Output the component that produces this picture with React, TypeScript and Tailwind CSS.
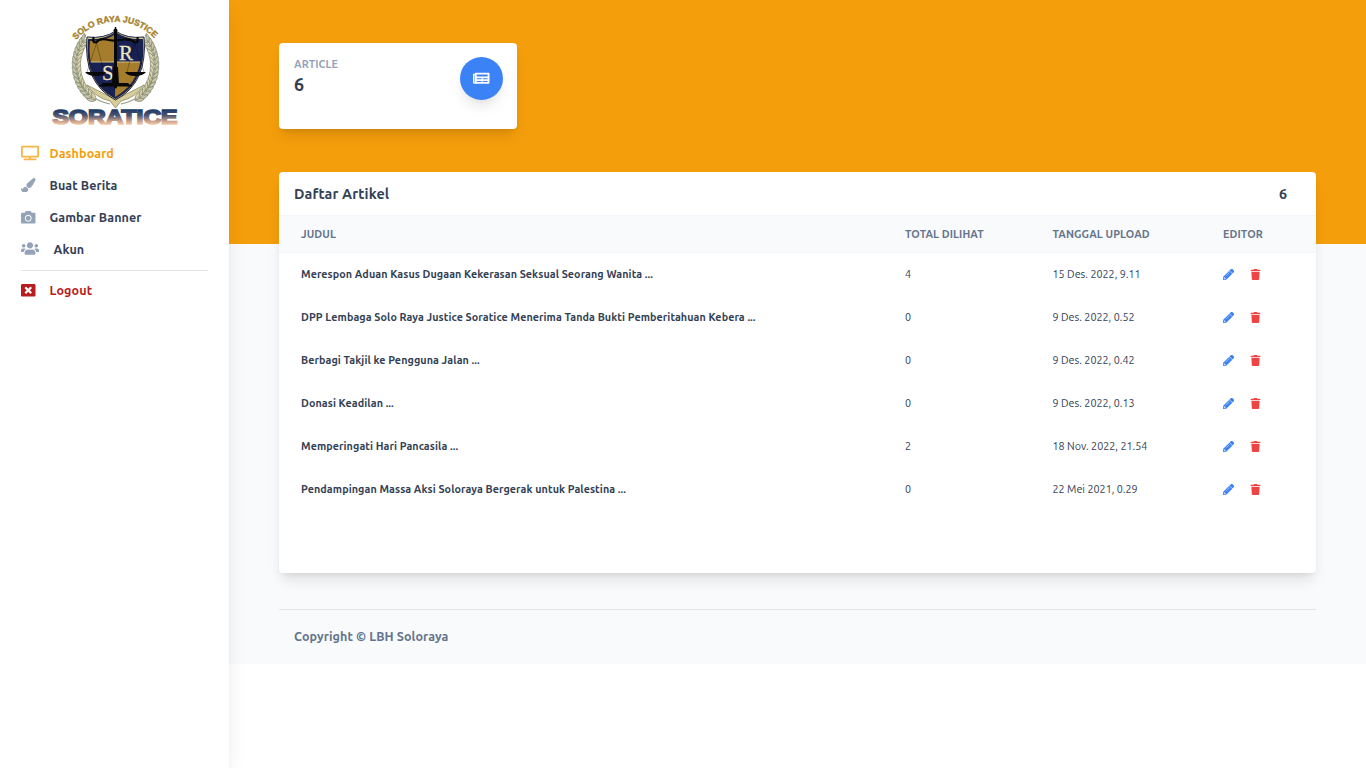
import {
  FaTv,
  FaPaintBrush,
  FaCamera,
  FaUsers,
  FaWindowClose,
  FaNewspaper,
  FaPencilAlt,
  FaTrash,
} from "react-icons/fa";

type Article = { title: string; views: number; date: string };

const articles: Article[] = [
  { title: "Merespon Aduan Kasus Dugaan Kekerasan Seksual Seorang Wanita ...", views: 4, date: "15 Des. 2022, 9.11" },
  { title: "DPP Lembaga Solo Raya Justice Soratice Menerima Tanda Bukti Pemberitahuan Kebera ...", views: 0, date: "9 Des. 2022, 0.52" },
  { title: "Berbagi Takjil ke Pengguna Jalan ...", views: 0, date: "9 Des. 2022, 0.42" },
  { title: "Donasi Keadilan ...", views: 0, date: "9 Des. 2022, 0.13" },
  { title: "Memperingati Hari Pancasila ...", views: 2, date: "18 Nov. 2022, 21.54" },
  { title: "Pendampingan Massa Aksi Soloraya Bergerak untuk Palestina ...", views: 0, date: "22 Mei 2021, 0.29" },
];

const leaves = Array.from({ length: 15 }, (_, i) => {
  const deg = 142 + i * 6.6;
  const a = (deg * Math.PI) / 180;
  return { x: 75.5 + Math.cos(a) * 39, y: 60 - Math.sin(a) * 41, deg };
});

function Laurel() {
  return (
    <g>
      <path d="M46 30C33 44 32 64 40 78C46 88 56 96 70 99" fill="none" stroke="#9a9d84" strokeWidth="1.2" />
      {leaves.map((l, i) => (
        <g key={i} transform={`translate(${l.x} ${l.y}) rotate(${180 - l.deg})`}>
          <path d="M0 3.5Q-5.5 1-4-5Q0-2.5 0 3.5Z" fill="#c9c6a6" stroke="#747d6b" strokeWidth=".6" />
          <path d="M0 3.5Q5.5 1 4-5Q0-2.5 0 3.5Z" fill="#ded5a9" stroke="#747d6b" strokeWidth=".6" />
        </g>
      ))}
    </g>
  );
}

function Logo() {
  return (
    <svg width="150" height="130" viewBox="0 0 150 130" className="block">
      <defs>
        <path id="arc" d="M36 35A53 53 0 0 1 116 35" />
        <linearGradient id="word" x1="0" y1="104" x2="0" y2="120" gradientUnits="userSpaceOnUse">
          <stop offset="0" stopColor="#173663" />
          <stop offset=".4" stopColor="#4d5471" />
          <stop offset=".75" stopColor="#c8a08c" />
          <stop offset="1" stopColor="#f9cfab" />
        </linearGradient>
        <clipPath id="shield">
          <path d="M49 35Q64 36 75.5 28Q87 36 102 35Q106 76 75.5 93Q45 76 49 35Z" />
        </clipPath>
      </defs>
      <text fontFamily="Liberation Sans, Arial, sans-serif" fontWeight="700" fontSize="8.6" fill="#a8842f" stroke="#a8842f" strokeWidth=".4">
        <textPath href="#arc" textLength="88" lengthAdjust="spacing">SOLO RAYA JUSTICE</textPath>
      </text>
      <Laurel />
      <g transform="translate(151 0) scale(-1 1)">
        <Laurel />
      </g>
      <path d="M47 80Q62 88 75.5 94Q89 88 104 80Q95 93 81 96L75.5 103L70 96Q56 93 47 80Z" fill="#d8cc97" stroke="#7b8060" strokeWidth=".7" />
      <path d="M47 32Q64 34 75.5 26Q87 34 104 32Q108 78 75.5 95Q43 78 47 32Z" fill="#d8cb92" stroke="#1b2140" strokeWidth="1" />
      <g clipPath="url(#shield)">
        <rect x="44" y="24" width="31.5" height="33" fill="#a67d2d" />
        <rect x="75.5" y="24" width="32" height="33" fill="#172154" />
        <rect x="44" y="57" width="31.5" height="41" fill="#172154" />
        <rect x="75.5" y="57" width="32" height="41" fill="#a67d2d" />
        <path d="M44 57H107" stroke="#d2c080" strokeWidth="1" />
      </g>
      <path d="M49 35Q64 36 75.5 28Q87 36 102 35Q106 76 75.5 93Q45 76 49 35Z" fill="none" stroke="#1b2348" strokeWidth="2" />
      <text x="79" y="54.5" fontFamily="Liberation Serif, serif" fontSize="21" fill="#eee4bd" stroke="#eee4bd" strokeWidth=".3">R</text>
      <text x="62" y="75" fontFamily="Liberation Serif, serif" fontSize="21" fill="#eee4bd" stroke="#eee4bd" strokeWidth=".3">S</text>
      <g fill="none" stroke="#080808" strokeLinecap="round">
        <path d="M53.5 33Q52 37.5 56 37.5Q60 33 66 34.5T75.5 35.5T85 34.5T95 37.5Q99 37.5 97.5 33" strokeWidth="2.2" />
        <path d="M56.5 38L47 67M56.5 38L64 67M94.5 38L87 67M94.5 38L104 67" strokeWidth=".3" />
        <path d="M75.5 27V82" strokeWidth="3" />
      </g>
      <g fill="#080808">
        <circle cx="75.5" cy="25.5" r="2" />
        <path d="M74.8 22h1.4v4.500h-1.4zM45 67H66Q64 71 56 71T45 67ZM85 67H106Q103 71 95 71T85 67ZM73 62h5l1 17 3 2H69l3-2zM63 78H88L90 80H92V81.5H59V80H61Z" />
      </g>
      <text x="12.500" y="119.300" textLength="125" lengthAdjust="spacingAndGlyphs" fontFamily="Liberation Sans, Arial, sans-serif" fontWeight="700" fontSize="21" fill="url(#word)" stroke="url(#word)" strokeWidth="1.700">SORATICE</text>
    </svg>
  );
}

export default function App() {
  return (
    <div className="flex h-[768px] w-[1366px] overflow-hidden bg-white font-['Ubuntu','Noto_Sans',sans-serif] text-[#334155]">
      <aside className="z-10 flex w-[229px] shrink-0 flex-col bg-white px-[21px] shadow-[0_9px_22px_-4px_rgba(0,0,0,0.1),0_3px_5px_-2px_rgba(0,0,0,0.05)]">
        <div className="-mx-[2px] mt-[5px] h-[132px] pl-[21px]">
          <Logo />
        </div>
        <nav className="flex flex-col text-[12.54px] font-bold leading-[18px] tracking-[0.09px]">
          <a className="flex h-8 items-center text-[#f59e0b]">
            <FaTv className="mb-px mr-[10.5px] h-[16px] w-[18px] opacity-75" />
            <span>Dashboard</span>
          </a>
          <a className="flex h-8 items-center">
            <FaPaintBrush className="mr-[14px] size-[14.5px] text-[#94a3b8]" />
            <span>Buat Berita</span>
          </a>
          <a className="flex h-8 items-center">
            <FaCamera className="mr-[14px] size-[14.5px] text-[#94a3b8]" />
            <span>Gambar Banner</span>
          </a>
          <a className="flex h-8 items-center">
            <FaUsers className="mb-[2px] mr-[14.5px] h-[15px] w-[18px] text-[#94a3b8]" />
            <span>Akun</span>
          </a>
          <hr className="mt-[5px] border-[#e2e4e8]" />
          <a className="mt-[3px] flex h-8 items-center text-[#b91c1c]">
            <FaWindowClose className="mr-[14px] size-[14.5px]" />
            <span>Logout</span>
          </a>
        </nav>
      </aside>

      <main className="h-[664px] flex-1 bg-[linear-gradient(#f59e0b_244px,#f8fafc_244px)] px-[50px] pt-[43px]">
        <section className="flex h-[86px] w-[238px] justify-between rounded bg-white px-[14px] pl-[15px] pt-[14px] shadow-[0_9px_14px_-3px_rgba(0,0,0,0.12),0_3px_5px_-2px_rgba(0,0,0,0.08)]">
          <div>
            <h5 className="text-[10.75px] font-bold leading-[15px] tracking-[0.1px] text-[#94a3b8]">ARTICLE</h5>
            <p className="text-[17.92px] font-bold leading-[24px]">6</p>
          </div>
          <div className="flex size-[43px] items-center justify-center rounded-full bg-[#3b82f6] text-white shadow-[0_9px_14px_-3px_rgba(0,0,0,0.1),0_3px_5px_-2px_rgba(0,0,0,0.05)]">
            <FaNewspaper className="mb-px size-[16.5px]" />
          </div>
        </section>

        <section className="mt-[43px] h-[401px] rounded bg-white shadow-[0_9px_14px_-3px_rgba(0,0,0,0.12),0_3px_5px_-2px_rgba(0,0,0,0.06)]">
          <header className="flex h-[43px] items-center justify-between pl-[15px] pr-[29px] pt-[2px] text-[14.33px] font-bold">
            <h3 className="tracking-[0.13px]">Daftar Artikel</h3>
            <span>6</span>
          </header>
          <div className="grid h-[38px] grid-cols-[604px_147.5px_170.5px_1fr] items-center border-y border-[#f1f5f9] bg-[#f8fafc] pl-[22px] text-[10.75px] font-bold tracking-[0.11px] text-[#64748b]">
            <span>JUDUL</span>
            <span>TOTAL DILIHAT</span>
            <span>TANGGAL UPLOAD</span>
            <span>EDITOR</span>
          </div>
          {articles.map((a) => (
            <div key={a.title} className="grid h-[43px] grid-cols-[604px_147.5px_170.5px_1fr] items-center whitespace-nowrap pl-[22px] text-[10.75px]">
              <span className="font-bold tracking-[0.08px]">{a.title}</span>
              <span>{a.views}</span>
              <span>{a.date}</span>
              <span className="flex gap-[16px] pb-px">
                <FaPencilAlt className="size-[11px] stroke-[#3b82f6] stroke-[20] text-[#3b82f6]" />
                <FaTrash className="-ml-[0.5px] size-[11px] text-[#ef4444]" />
              </span>
            </div>
          ))}
        </section>

        <footer className="mt-[36px] border-t border-[#e2e4e8] pl-[15px] pt-[17px] text-[12.54px] font-bold leading-[18px] tracking-[0.08px] text-[#64748b]">
          Copyright © LBH Soloraya
        </footer>
      </main>
    </div>
  );
}
